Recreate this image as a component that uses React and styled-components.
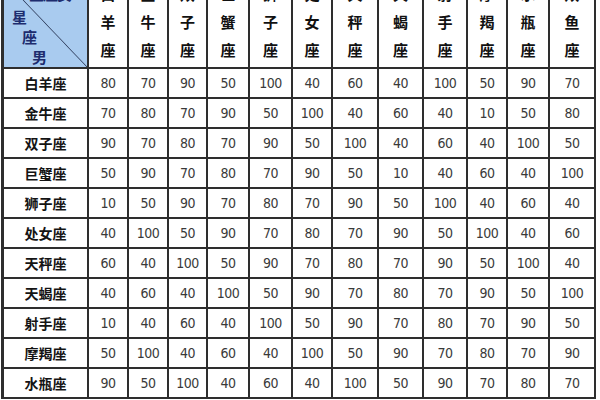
import React from "react";
import styled, { createGlobalStyle } from "styled-components";

const GlobalStyle = createGlobalStyle`
  html, body {
    margin: 0;
    padding: 0;
    background: #ffffff;
    overflow: hidden;
  }
`;

const signs = [
  "白羊座", "金牛座", "双子座", "巨蟹座", "狮子座", "处女座",
  "天秤座", "天蝎座", "射手座", "摩羯座", "水瓶座", "双鱼座",
];

const rows = [
  ["白羊座", [80, 70, 90, 50, 100, 40, 60, 40, 100, 50, 90, 70]],
  ["金牛座", [70, 80, 70, 90, 50, 100, 40, 60, 40, 10, 50, 80]],
  ["双子座", [90, 70, 80, 70, 90, 50, 100, 40, 60, 40, 100, 50]],
  ["巨蟹座", [50, 90, 70, 80, 70, 90, 50, 10, 40, 60, 40, 100]],
  ["狮子座", [10, 50, 90, 70, 80, 70, 90, 50, 100, 40, 60, 40]],
  ["处女座", [40, 100, 50, 90, 70, 80, 70, 90, 50, 100, 40, 60]],
  ["天秤座", [60, 40, 100, 50, 90, 70, 80, 70, 90, 50, 100, 40]],
  ["天蝎座", [40, 60, 40, 100, 50, 90, 70, 80, 70, 90, 50, 100]],
  ["射手座", [10, 40, 60, 40, 100, 50, 90, 70, 80, 70, 90, 50]],
  ["摩羯座", [50, 100, 40, 60, 40, 100, 50, 90, 70, 80, 70, 90]],
  ["水瓶座", [90, 50, 100, 40, 60, 40, 100, 50, 90, 70, 80, 70]],
];

const Page = styled.div`
  width: 600px;
  height: 400px;
  overflow: hidden;
`;

const Grid = styled.div`
  display: grid;
  width: max-content;
  grid-template-columns: 83px 38px 38px 37px 40px 41px 38px 44px 43px 42px 38px 40px 44px;
  grid-template-rows: 87px repeat(11, 28px);
  gap: 2px;
  padding: 2px;
  margin: -22px 0 0 1px;
  background: #2e2e2e;
  border-left: 1px solid #2e2e2e;
`;

const Cell = styled.div`
  background: #ffffff;
  display: flex;
  align-items: center;
  justify-content: center;
  overflow: hidden;
`;

const Corner = styled.div`
  background: linear-gradient(
    to top right,
    #a9cbef calc(50% - 0.8px),
    #3a4a6a 50%,
    #a9cbef calc(50% + 0.8px)
  );
  display: flex;
  flex-direction: column;
  font-family: "Noto Sans CJK SC", sans-serif;
  font-weight: 700;
  font-size: 15px;
  color: #1d2c6e;
  padding: 6px 0 0;
  overflow: hidden;
`;

const TopLabel = styled.div`
  align-self: flex-end;
  margin-right: 16px;
  line-height: 16px;
  letter-spacing: -1px;
`;

const SideLabel = styled.div`
  line-height: 20px;
  padding-left: ${(p) => p.$indent}px;
`;

const ColHead = styled(Cell)`
  flex-direction: column;
  justify-content: flex-end;
  font-family: "Noto Sans CJK SC", sans-serif;
  font-weight: 700;
  font-size: 15px;
  line-height: 28px;
  color: #111111;
  padding-bottom: 3px;
`;

const RowHead = styled(Cell)`
  font-family: "Noto Sans CJK SC", sans-serif;
  font-weight: 700;
  font-size: 14px;
  color: #141414;
`;

const Value = styled(Cell)`
  font-family: "DejaVu Sans Condensed", "DejaVu Sans", sans-serif;
  font-size: 14px;
  letter-spacing: -0.5px;
  color: #3a3a3a;
`;

export default function App() {
  return (
    <Page>
      <GlobalStyle />
      <Grid>
        <Corner>
          <TopLabel>星座女</TopLabel>
          <div style={{ flex: 1 }} />
          <SideLabel $indent={8}>星</SideLabel>
          <SideLabel $indent={18}>座</SideLabel>
          <SideLabel $indent={28}>男</SideLabel>
        </Corner>
        {signs.map((s) => (
          <ColHead key={s}>
            {s.split("").map((ch, i) => (
              <span key={i}>{ch}</span>
            ))}
          </ColHead>
        ))}
        {rows.map(([name, vals]) => (
          <React.Fragment key={name}>
            <RowHead>{name}</RowHead>
            {vals.map((v, i) => (
              <Value key={i}>{v}</Value>
            ))}
          </React.Fragment>
        ))}
      </Grid>
    </Page>
  );
}
